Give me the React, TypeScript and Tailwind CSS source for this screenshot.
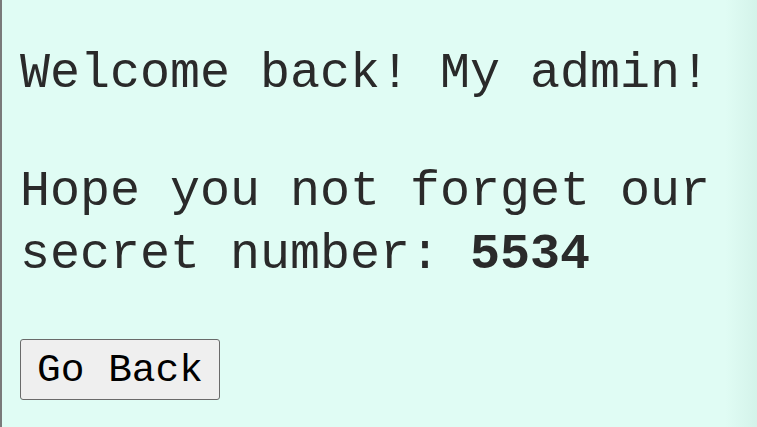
export default function App() {
  return (
    <div className="h-[427px] w-[757px] overflow-hidden bg-[#e0fcf4] relative">
      <div className="h-full border-l-2 border-[#7a7a7a] pl-[18px] pt-[42px] text-[#2a2a2a] [font-family:'Liberation_Mono',monospace] text-[50px] leading-[63px]">
        <p>Welcome back! My admin!</p>
        <p className="mt-[55px]">
          Hope you not forget our
          <br />
          secret number: <b className="font-bold">5534</b>
        </p>
        <button className="mt-[53px] h-[61px] w-[200px] rounded-[3px] border border-[#6a6a6a] bg-[#efefef] pt-[3px] text-[39.5px] leading-none text-black [font-family:'Liberation_Mono',monospace]">
          Go Back
        </button>
      </div>
      {/* soft shading along the right edge */}
      <div className="pointer-events-none absolute right-0 top-0 h-full w-[32px] bg-gradient-to-r from-transparent to-[#d4f3ea]" />
    </div>
  );
}
